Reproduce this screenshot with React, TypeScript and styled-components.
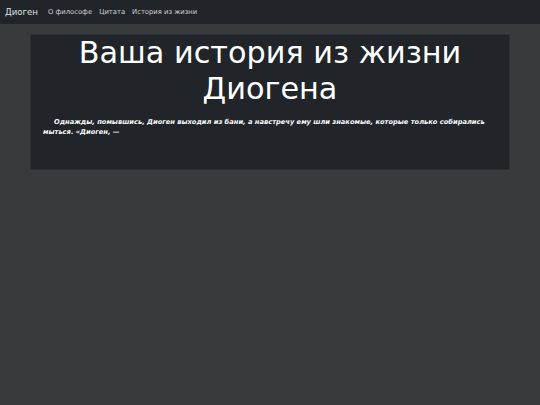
import React from 'react';
import styled, { createGlobalStyle } from 'styled-components';

const GlobalStyle = createGlobalStyle`
  html, body {
    margin: 0;
    padding: 0;
    background: #373b3e;
    font-family: "DejaVu Sans", "Liberation Sans", sans-serif;
  }
`;

const Page = styled.div`
  min-height: 405px;
  background: #373b3e;
`;

const Navbar = styled.nav`
  height: 24px;
  background: #212529;
  display: flex;
  align-items: center;
  padding: 0 5px;
  box-sizing: border-box;
`;

const Brand = styled.span`
  font-size: 8.6px;
  line-height: 10px;
  color: #dee2e6;
  margin-right: 10px;
`;

const NavList = styled.ul`
  display: flex;
  align-items: center;
  gap: 7px;
  list-style: none;
  margin: 0;
  padding: 0;
`;

const NavItem = styled.li`
  display: flex;
  align-items: center;
  height: 10px;
`;

const NavLink = styled.a`
  font-size: 6.8px;
  line-height: 10px;
  color: #ced4da;
  text-decoration: none;
`;

const Main = styled.main`
  padding: 10px 30px;
`;

const Card = styled.section`
  background: #212529;
  border: 1px solid #2b3035;
  min-height: 136px;
  padding: 0 12px 12px;
  box-sizing: border-box;
`;

const Title = styled.h1`
  margin: 0;
  font-size: 30.3px;
  font-weight: 400;
  line-height: 36px;
  text-align: center;
  color: #fff;
`;

const Story = styled.p`
  margin: 10px 0 0;
  font-size: 6.7px;
  line-height: 10px;
  font-weight: 700;
  font-style: italic;
  color: #f8f9fa;
  text-indent: 11px;
`;

const links = ['О философе', 'Цитата', 'История из жизни'];

export default function App() {
  return (
    <Page>
      <GlobalStyle />
      <Navbar>
        <Brand>Диоген</Brand>
        <NavList>
          {links.map((l) => (
            <NavItem key={l}>
              <NavLink href="#">{l}</NavLink>
            </NavItem>
          ))}
        </NavList>
      </Navbar>
      <Main>
        <Card>
          <Title>
            Ваша история из жизни
            <br />
            Диогена
          </Title>
          <Story>
            Однажды, помывшись, Диоген выходил из бани, а навстречу ему шли знакомые, которые только собирались мыться. «Диоген, —
          </Story>
        </Card>
      </Main>
    </Page>
  );
}
